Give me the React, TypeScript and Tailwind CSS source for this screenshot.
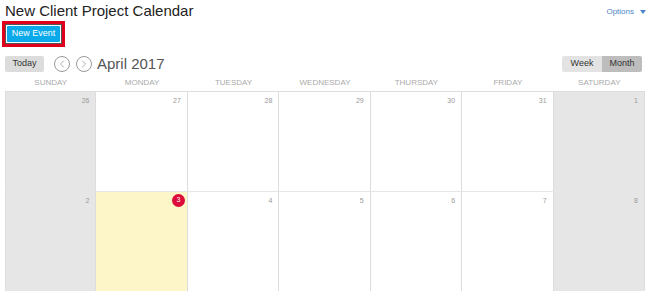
import { ChevronLeft, ChevronRight } from 'lucide-react';

const days = ['SUNDAY', 'MONDAY', 'TUESDAY', 'WEDNESDAY', 'THURSDAY', 'FRIDAY', 'SATURDAY'];

const weeks = [
  ['26', '27', '28', '29', '30', '31', '1'],
  ['2', '3', '4', '5', '6', '7', '8'],
];

export default function App() {
  return (
    <div className="w-[650px] h-[291px] overflow-hidden bg-white font-['Liberation_Sans',Arial,sans-serif] relative">
      <div className="flex items-start justify-between pl-[5px] pr-[4px]">
        <div className="text-[15px] leading-[18px] text-[#222] pt-[2px]">New Client Project Calendar</div>
        <div className="flex items-center gap-[6px] pt-[6px] text-[8px] text-[#4a86c8]">
          Options
          <span className="w-0 h-0 border-l-[3px] border-r-[3px] border-t-[4px] border-l-transparent border-r-transparent border-t-[#4a86c8]" />
        </div>
      </div>

      <div className="ml-[2px] mt-[1px] w-[63px] h-[26px] border-[3px] border-[#e0001b]">
        <div className="w-full h-full border border-[#555] p-[1px]">
          <div className="h-full bg-[#0aa9ea] rounded-[1px] flex items-center justify-center text-white text-[9px]">
            New Event
          </div>
        </div>
      </div>

      <div className="flex items-center justify-between px-[5px] mt-[9px]">
        <div className="flex items-center">
          <div className="w-[39px] h-[16px] bg-[#dcdcdc] rounded-[2px] flex items-center justify-center text-[9px] text-[#333]">
            Today
          </div>
          <div className="ml-[10px] w-[16px] h-[16px] rounded-full border border-[#999] flex items-center justify-center text-[#888]">
            <ChevronLeft className="w-[12px] h-[12px]" strokeWidth={1.3} />
          </div>
          <div className="ml-[6px] w-[16px] h-[16px] rounded-full border border-[#999] flex items-center justify-center text-[#888]">
            <ChevronRight className="w-[12px] h-[12px]" strokeWidth={1.3} />
          </div>
          <div className="ml-[5px] text-[15px] leading-[16px] text-[#555]">April 2017</div>
        </div>
        <div className="flex mr-[3px] text-[9px] text-[#333]">
          <div className="w-[40px] h-[16px] bg-[#e3e3e3] rounded-l-[2px] flex items-center justify-center">Week</div>
          <div className="w-[40px] h-[16px] bg-[#bdbdbd] rounded-r-[2px] flex items-center justify-center">Month</div>
        </div>
      </div>

      <div className="mx-[5px] mt-[6px] w-[640px]">
        <div className="grid grid-cols-7 h-[14px] border-b border-[#ddd]">
          {days.map((d) => (
            <div key={d} className="text-center text-[8px] leading-[10px] text-[#aaa]">{d}</div>
          ))}
        </div>
        {weeks.map((week, wi) => (
          <div key={wi} className="grid grid-cols-7 h-[100px] border-b border-[#e6e6e6]">
            {week.map((n, di) => {
              const weekend = di === 0 || di === 6;
              const today = wi === 1 && di === 1;
              return (
                <div
                  key={di}
                  className={`border-r border-[#ddd] first:border-l ${
                    weekend ? 'bg-[#e6e6e6]' : today ? 'bg-[#fdf6c8]' : 'bg-white'
                  } flex justify-end pr-[6px] pt-[5px]`}
                >
                  {today ? (
                    <div className="w-[13px] h-[13px] -mt-[3px] -mr-[4px] rounded-full bg-[#dc0b3a] text-white text-[7px] flex items-center justify-center">
                      {n}
                    </div>
                  ) : (
                    <div className="text-[7px] leading-[8px] text-[#999]">{n}</div>
                  )}
                </div>
              );
            })}
          </div>
        ))}
      </div>
    </div>
  );
}
